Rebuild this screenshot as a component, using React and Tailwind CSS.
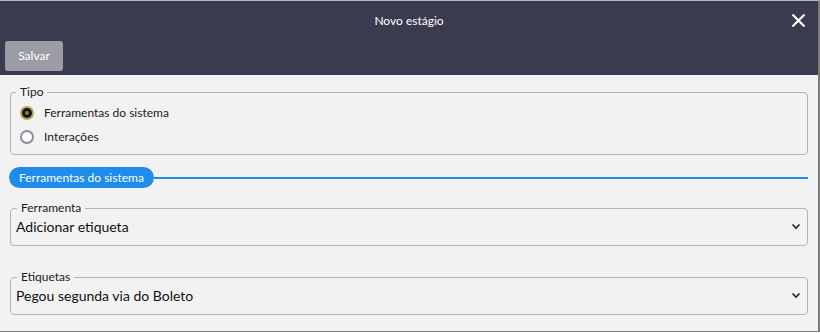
import React from 'react';

const font = { fontFamily: 'Lato, "Open Sans", sans-serif' };

const Radio = ({ checked, label }) => (
  <div className="flex items-center h-6">
    <span className="w-[14px] h-[14px] ml-[9px] mr-[10px]">
      {checked ? (
        <span className="flex items-center justify-center w-[14px] h-[14px] rounded-full bg-[#b3a84f]">
          <span className="flex items-center justify-center w-[10px] h-[10px] rounded-full bg-[#141414]">
            <span className="w-[4px] h-[4px] rounded-full bg-[#8a8040]" />
          </span>
        </span>
      ) : (
        <span className="block w-[14px] h-[14px] rounded-full border-2 border-[#8f8c9c] bg-white" />
      )}
    </span>
    <span className="text-[12px] text-[#1a1a1a]">{label}</span>
  </div>
);

const SelectField = ({ legend, value }) => (
  <fieldset className="mx-[10px] border border-[#b3b3b3] rounded-[4px] px-[5px] h-[45px]">
    <legend className="text-[12px] text-[#1a1a1a] px-[4px] ml-[1px] leading-[14px]">{legend}</legend>
    <div className="flex items-center justify-between mt-[1px]">
      <span className="text-[14px] text-[#111]">{value}</span>
      <svg width="10" height="7" viewBox="0 0 10 7" className="mr-[1px]">
        <path d="M1.5 1.5 L5 5 L8.5 1.5" fill="none" stroke="#222" strokeWidth="1.6" />
      </svg>
    </div>
  </fieldset>
);

const App = () => {
  return (
    <div style={font} className="w-[820px] h-[333px] bg-white">
      <div className="w-[820px] h-[332px] border-t border-t-[#b8b8b8] border-r-2 border-b border-[#7a7a7a] bg-[#f2f2f2] flex flex-col">
        {/* Header */}
        <div className="bg-[#3a3b4e] h-[74px] relative">
          <div className="text-center text-white text-[12px] pt-[11px]">Novo estágio</div>
          <button className="absolute right-[12px] top-[12px] text-white">
            <svg width="15" height="15" viewBox="0 0 15 15">
              <path d="M1.5 1.5 L13.5 13.5 M13.5 1.5 L1.5 13.5" stroke="#fff" strokeWidth="2.2" />
            </svg>
          </button>
          <div className="pl-[5px] pt-[11px]">
            <button className="w-[58px] h-[30px] rounded-[3px] bg-[#9c9ca6] text-white text-[12px]">
              Salvar
            </button>
          </div>
        </div>

        {/* Tipo */}
        <fieldset className="mx-[10px] mt-[10px] border border-[#b3b3b3] rounded-[4px] h-[70px]">
          <legend className="text-[12px] text-[#1a1a1a] px-[4px] ml-[5px] leading-[14px]">Tipo</legend>
          <div className="mt-[2px]">
            <Radio checked label="Ferramentas do sistema" />
            <Radio label="Interações" />
          </div>
        </fieldset>

        {/* Section divider */}
        <div className="flex items-center mt-[12px] ml-[9px] mr-[10px]">
          <span className="bg-[#1e8ceb] text-white text-[12px] rounded-full h-[21px] px-[10px] flex items-center">
            Ferramentas do sistema
          </span>
          <div className="flex-1 h-[2px] bg-[#1e8ceb]" />
        </div>

        <div className="mt-[13px]">
          <SelectField legend="Ferramenta" value="Adicionar etiqueta" />
        </div>
        <div className="mt-[24px]">
          <SelectField legend="Etiquetas" value="Pegou segunda via do Boleto" />
        </div>
      </div>
    </div>
  );
};

export default App;
